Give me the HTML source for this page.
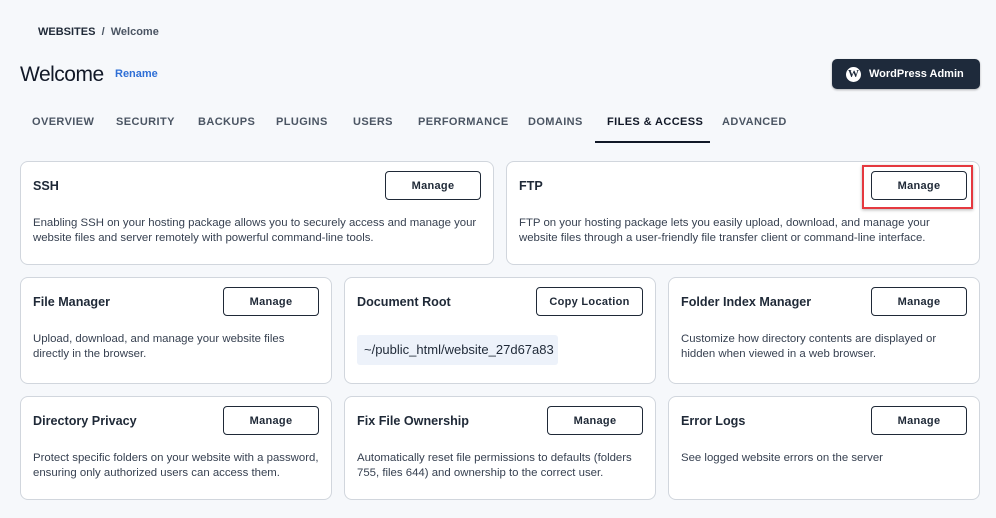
<!DOCTYPE html>
<html><head><style>
*{box-sizing:border-box;margin:0;padding:0}
body{width:996px;height:518px;background:#f6f8fb;font-family:"Liberation Sans",sans-serif;color:#1f2937;position:relative;overflow:hidden}
.a{position:absolute}
.bc{left:38px;top:26px;font-size:11px;font-weight:bold;color:#1f2937}
.bc span{color:#4b5563}
.h1{left:20px;top:63px;font-size:21px;color:#111827;letter-spacing:-0.5px}
.rn{left:115px;top:68px;font-size:11px;font-weight:bold;color:#2f6fd6}
.wp{left:832px;top:59px;width:148px;height:30px;background:#1e2a3b;border-radius:5px;color:#fff;font-size:11px;font-weight:bold;display:flex;align-items:center;padding-left:14px;box-shadow:0 1px 2px rgba(0,0,0,.3)}
.wp i{width:15px;height:15px;border-radius:50%;background:#fff;color:#1e2a3b;font-style:normal;font-family:"Liberation Serif",serif;font-size:11px;font-weight:bold;display:flex;align-items:center;justify-content:center;margin-right:8px}
.tab{top:116px;font-size:11px;font-weight:bold;color:#4b5563;letter-spacing:.4px}
.card{background:#fff;border:1px solid #d1d6dd;border-radius:8px}
.t{font-size:12.6px;font-weight:bold;color:#1f2937}
.d{font-size:11.4px;line-height:15px;color:#374151}
.btn{border:1px solid #1f2937;border-radius:4px;height:29px;font-size:11px;font-weight:bold;display:flex;align-items:center;justify-content:center;color:#1f2937;background:#fff;letter-spacing:.3px}
</style></head><body>
<div class="a bc">WEBSITES <span>&nbsp;/&nbsp; Welcome</span></div>
<div class="a h1">Welcome</div>
<div class="a rn">Rename</div>
<div class="a wp"><i>W</i>WordPress Admin</div>
<div class="a tab" style="left:32px">OVERVIEW</div>
<div class="a tab" style="left:116px">SECURITY</div>
<div class="a tab" style="left:198px">BACKUPS</div>
<div class="a tab" style="left:276px">PLUGINS</div>
<div class="a tab" style="left:353px">USERS</div>
<div class="a tab" style="left:418px">PERFORMANCE</div>
<div class="a tab" style="left:528px">DOMAINS</div>
<div class="a tab" style="left:607px;color:#111827">FILES &amp; ACCESS</div>
<div class="a tab" style="left:722px">ADVANCED</div>
<div class="a" style="left:595px;top:141px;width:115px;height:1.5px;background:#111827"></div>

<div class="a card" style="left:20px;top:161px;width:474px;height:104px"></div>
<div class="a t" style="left:33px;top:179px">SSH</div>
<div class="a btn" style="left:385px;top:171px;width:96px">Manage</div>
<div class="a d" style="left:33px;top:216px">Enabling SSH on your hosting package allows you to securely access and manage your<br>website files and server remotely with powerful command-line tools.</div>

<div class="a card" style="left:506px;top:161px;width:474px;height:104px"></div>
<div class="a t" style="left:519px;top:179px">FTP</div>
<div class="a" style="left:862px;top:165px;width:111px;height:44px;border:2px solid #e5393f;box-shadow:0 1px 3px rgba(0,0,0,.3)"></div>
<div class="a btn" style="left:871px;top:171px;width:96px">Manage</div>
<div class="a d" style="left:519px;top:216px">FTP on your hosting package lets you easily upload, download, and manage your<br>website files through a user-friendly file transfer client or command-line interface.</div>

<div class="a card" style="left:20px;top:277px;width:312px;height:107px"></div>
<div class="a t" style="left:33px;top:295px">File Manager</div>
<div class="a btn" style="left:223px;top:287px;width:96px">Manage</div>
<div class="a d" style="left:33px;top:332px">Upload, download, and manage your website files<br>directly in the browser.</div>

<div class="a card" style="left:344px;top:277px;width:312px;height:107px"></div>
<div class="a t" style="left:357px;top:295px">Document Root</div>
<div class="a btn" style="left:536px;top:287px;width:107px">Copy Location</div>
<div class="a" style="left:357px;top:335px;width:201px;height:30px;background:#edf2fa;border-radius:3px;font-size:13px;color:#1f2937;padding:7px 0 0 7px">~/public_html/website_27d67a83</div>

<div class="a card" style="left:668px;top:277px;width:312px;height:107px"></div>
<div class="a t" style="left:681px;top:295px">Folder Index Manager</div>
<div class="a btn" style="left:871px;top:287px;width:96px">Manage</div>
<div class="a d" style="left:681px;top:332px">Customize how directory contents are displayed or<br>hidden when viewed in a web browser.</div>

<div class="a card" style="left:20px;top:396px;width:312px;height:104px"></div>
<div class="a t" style="left:33px;top:414px">Directory Privacy</div>
<div class="a btn" style="left:223px;top:406px;width:96px">Manage</div>
<div class="a d" style="left:33px;top:451px">Protect specific folders on your website with a password,<br>ensuring only authorized users can access them.</div>

<div class="a card" style="left:344px;top:396px;width:312px;height:104px"></div>
<div class="a t" style="left:357px;top:414px">Fix File Ownership</div>
<div class="a btn" style="left:547px;top:406px;width:96px">Manage</div>
<div class="a d" style="left:357px;top:451px">Automatically reset file permissions to defaults (folders<br>755, files 644) and ownership to the correct user.</div>

<div class="a card" style="left:668px;top:396px;width:312px;height:104px"></div>
<div class="a t" style="left:681px;top:414px">Error Logs</div>
<div class="a btn" style="left:871px;top:406px;width:96px">Manage</div>
<div class="a d" style="left:681px;top:451px">See logged website errors on the server</div>
</body></html>
